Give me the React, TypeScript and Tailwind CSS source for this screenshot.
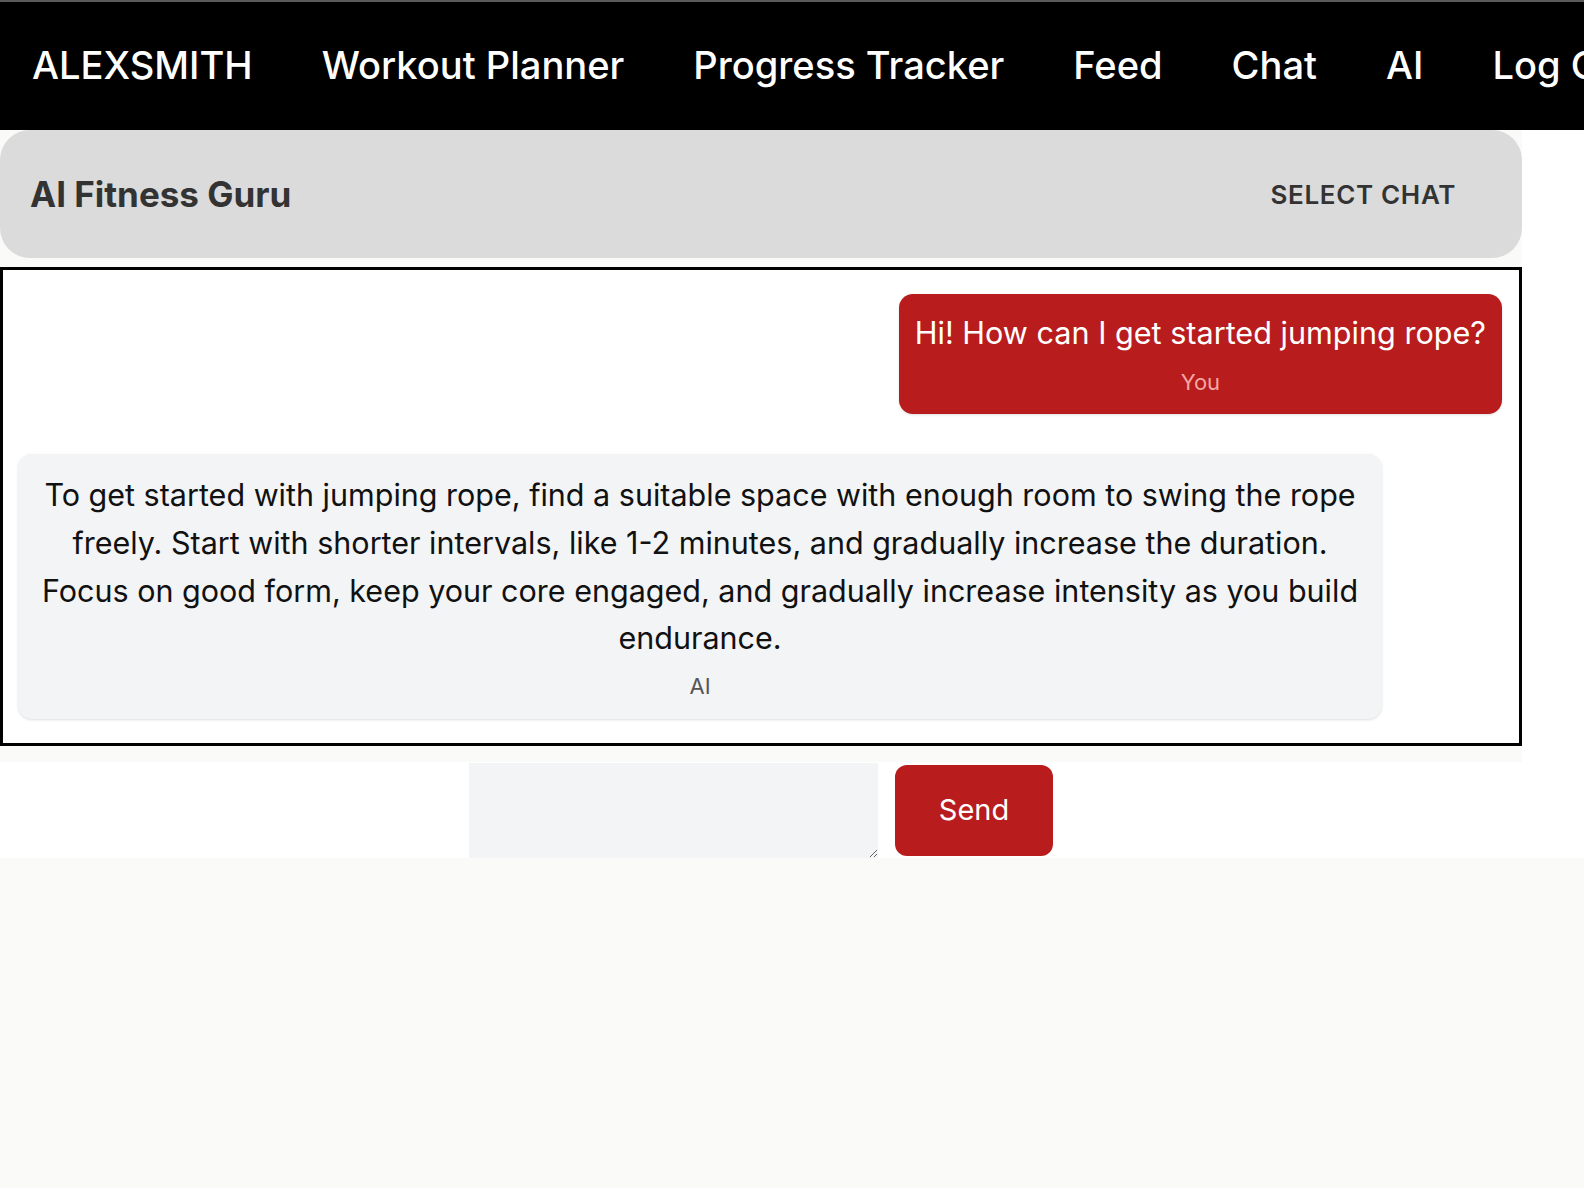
import { useState } from 'react'

const NAV_ITEMS = ['ALEXSMITH', 'Workout Planner', 'Progress Tracker', 'Feed', 'Chat', 'AI', 'Log Out']

type Message = { from: 'user' | 'ai'; text: string }

const MESSAGES: Message[] = [
  { from: 'user', text: 'Hi! How can I get started jumping rope?' },
  {
    from: 'ai',
    text: 'To get started with jumping rope, find a suitable space with enough room to swing the rope freely. Start with shorter intervals, like 1-2 minutes, and gradually increase the duration. Focus on good form, keep your core engaged, and gradually increase intensity as you build endurance.',
  },
]

function NavBar() {
  return (
    <nav className="flex h-[130px] items-center gap-[69px] overflow-hidden whitespace-nowrap border-t-2 border-[#5a5a5a] bg-black px-8">
      {NAV_ITEMS.map((item) => (
        <a key={item} href="#" className="text-[38.1px] font-medium text-white">
          {item}
        </a>
      ))}
    </nav>
  )
}

function Bubble({ message }: { message: Message }) {
  if (message.from === 'user') {
    return (
      <div className="flex justify-end pr-[2px]">
        <div className="rounded-[14px] bg-[#b91c1c] px-4 pb-[15px] pt-[17px] text-center shadow-sm">
          <p className="text-[30.6px] leading-[44px] text-white">{message.text}</p>
          <p className="mt-[10px] text-[22px] leading-[34px] text-[#f2a8a2]">You</p>
        </div>
      </div>
    )
  }
  return (
    <div className="flex justify-start">
      <div className="w-[1364px] rounded-[14px] bg-[#f3f4f6] px-5 pb-[16px] pt-[17px] text-center shadow-sm">
        <p className="text-[30.5px] leading-[47.8px] text-[#111]">{message.text}</p>
        <p className="mt-[7px] text-[22px] leading-[34px] text-[#555]">AI</p>
      </div>
    </div>
  )
}

export default function App() {
  const [draft, setDraft] = useState('')

  return (
    <div className="min-h-screen bg-[#fafaf9]" style={{ fontFamily: 'Inter, "Noto Sans", sans-serif' }}>
      <NavBar />
      <div className="bg-white">
        <div className="w-[1522px] bg-[#fafaf9]">
          <div className="flex h-[128px] items-center justify-between rounded-[30px] bg-[#dbdbdb] pl-[30px] pr-[66px]">
            <h1 className="text-[35px] font-bold text-[#333]">AI Fitness Guru</h1>
            <button className="text-[26px] font-semibold tracking-wide text-[#333]">SELECT CHAT</button>
          </div>
          <div className="mt-[9px] flex flex-col gap-10 border-[3px] border-black bg-white px-[15px] pb-6 pt-6">
            {MESSAGES.map((m, i) => (
              <Bubble key={i} message={m} />
            ))}
          </div>
          <div className="h-[16px]" />
        </div>
        <form
          className="flex h-[96px] w-[1522px] items-center justify-center gap-[17px]"
          onSubmit={(e) => e.preventDefault()}
        >
          <textarea
            value={draft}
            onChange={(e) => setDraft(e.target.value)}
            className="h-[95px] w-[409px] resize-y bg-[#f3f4f6] p-2 outline-none"
          />
          <button type="submit" className="h-[91px] w-[158px] rounded-[12px] bg-[#b91c1c] text-[29px] font-normal text-white">
            Send
          </button>
        </form>
      </div>
    </div>
  )
}
